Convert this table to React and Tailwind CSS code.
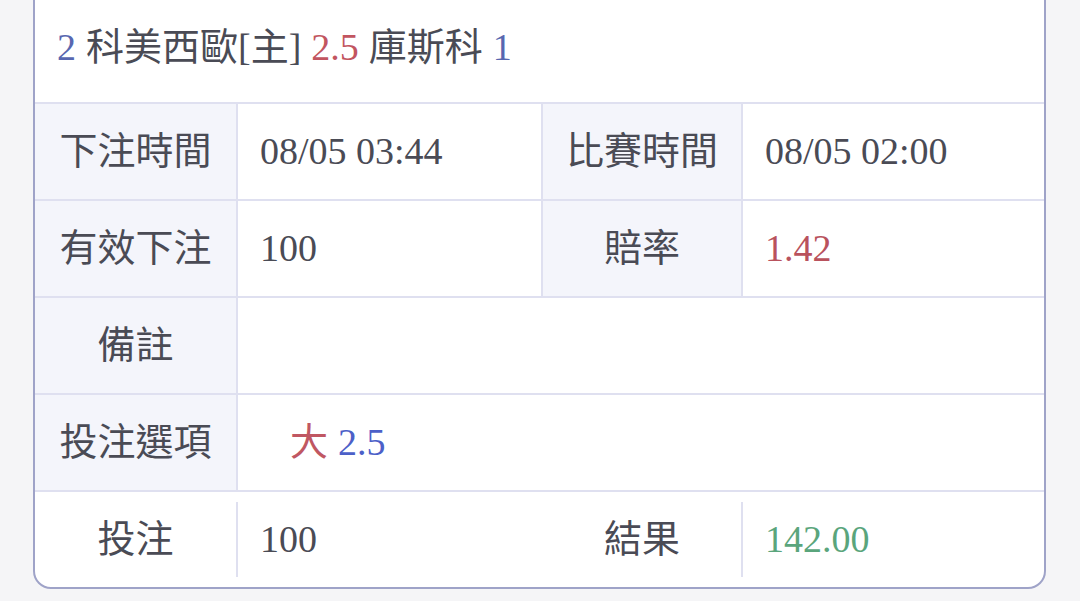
import React from 'react';

const font = { fontFamily: '"Liberation Serif", "Noto Sans CJK TC", serif' };

const Label = ({ children }) => (
  <div className="flex items-center justify-center bg-[#f4f5fb] border-r-2 border-[#dfe0f0]">
    {children}
  </div>
);

const Value = ({ children, className = '', border = false }) => (
  <div className={`flex items-center pl-[22px] ${border ? 'border-r-2 border-[#dfe0f0]' : ''} ${className}`}>
    {children}
  </div>
);

const Row = ({ children }) => (
  <div className="grid grid-cols-[203px_305px_200px_1fr] h-[97px] border-b-2 border-[#dfe0f0]">
    {children}
  </div>
);

export default function App() {
  return (
    <div className="min-h-screen bg-[#f5f5f7] text-[38px] text-[#4a4b55] overflow-hidden" style={font}>
      <div className="ml-[33px] w-[1013px] -mt-[20px] bg-white border-[2.5px] border-[#9fa3c8] rounded-b-[18px] overflow-hidden">
        {/* header */}
        <div className="h-[122px] pt-[20px] border-b-2 border-[#dfe0f0] flex items-center pl-[22px] pb-[10px] text-[38px] leading-none">
          <span className="text-[#5867b0]">2</span>
          <span className="ml-[10px]">科美西歐[主]</span>
          <span className="ml-[10px] text-[#c25560]">2.5</span>
          <span className="ml-[10px]">庫斯科</span>
          <span className="ml-[10px] text-[#5867b0]">1</span>
        </div>

        <Row>
          <Label>下注時間</Label>
          <Value border>08/05 03:44</Value>
          <Label>比賽時間</Label>
          <Value>08/05 02:00</Value>
        </Row>
        <Row>
          <Label>有效下注</Label>
          <Value border>100</Value>
          <Label>賠率</Label>
          <Value className="text-[#b9525d]">1.42</Value>
        </Row>
        <div className="grid grid-cols-[203px_1fr] h-[97px] border-b-2 border-[#dfe0f0]">
          <Label>備註</Label>
          <div />
        </div>
        <div className="grid grid-cols-[203px_1fr] h-[97px] border-b-2 border-[#dfe0f0]">
          <Label>投注選項</Label>
          <div className="flex items-center pl-[52px]">
            <span className="text-[#c05762]">大</span>
            <span className="ml-[10px] text-[#4c60c8]">2.5</span>
          </div>
        </div>

        {/* last row */}
        <div className="flex items-center h-[95px]">
          <div className="w-[201px] flex justify-center">投注</div>
          <div className="w-[2px] h-[75px] bg-[#dfe0f0]" />
          <div className="w-[305px] pl-[22px]">100</div>
          <div className="w-[198px] flex justify-center">結果</div>
          <div className="w-[2px] h-[75px] bg-[#dfe0f0]" />
          <div className="flex-1 pl-[22px] text-[#5aa57c]">142.00</div>
        </div>
      </div>
    </div>
  );
}
